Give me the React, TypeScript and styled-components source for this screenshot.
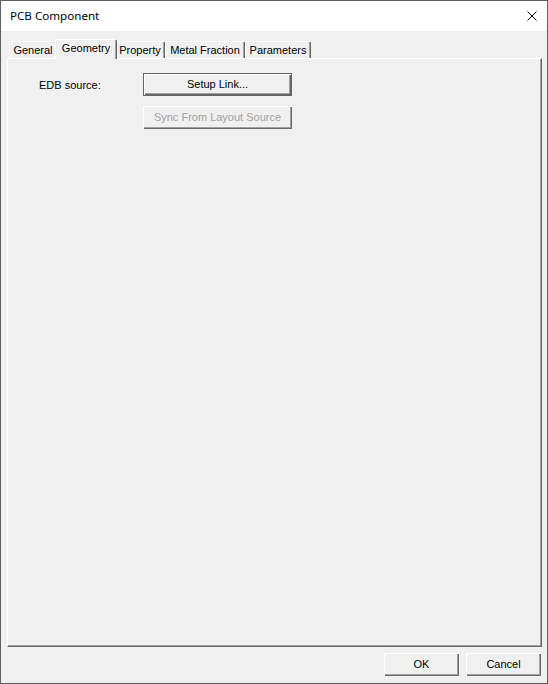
import { createGlobalStyle, styled } from 'styled-components';

const GlobalStyle = createGlobalStyle`
  html, body {
    margin: 0;
    padding: 0;
    background: #f0f0f0;
  }
  * {
    box-sizing: border-box;
  }
`;

const Window = styled.div`
  width: 548px;
  height: 684px;
  border: 1px solid #5f5f5f;
  background: #f0f0f0;
  display: flex;
  flex-direction: column;
  font-family: "Liberation Sans", Arial, sans-serif;
  font-size: 11px;
  color: #000;
`;

const TitleBar = styled.div`
  height: 30px;
  background: #fff;
  display: flex;
  align-items: center;
  justify-content: space-between;
  padding: 0 10px 0 9px;
`;

const Title = styled.span`
  font-family: "Segoe UI", "Noto Sans", sans-serif;
  font-size: 11.6px;
  padding-bottom: 1px;
`;

const CloseIcon = styled.svg`
  width: 10px;
  height: 10px;
`;

const Body = styled.div`
  flex: 1;
  display: flex;
  flex-direction: column;
  padding: 8px 5px 7px 6px;
`;

const TabStrip = styled.div`
  display: flex;
  align-items: flex-end;
  height: 19px;
  padding-left: 2px;
`;

const Tab = styled.div<{ $width: number; $active?: boolean }>`
  position: relative;
  width: ${(p) => (p.$active ? p.$width + 4 : p.$width)}px;
  height: ${(p) => (p.$active ? 20 : 17)}px;
  margin: ${(p) => (p.$active ? '0 -2px -1px' : '0')};
  z-index: ${(p) => (p.$active ? 2 : 1)};
  background: #f0f0f0;
  border-left: 1px solid #fff;
  border-top: 1px solid #fff;
  border-right: 1px solid #696969;
  border-top-left-radius: 2px;
  border-top-right-radius: 2px;
  box-shadow: inset -1px 0 #a0a0a0;
  display: flex;
  align-items: center;
  justify-content: center;
  padding-bottom: ${(p) => (p.$active ? 3 : 0)}px;
  white-space: nowrap;
`;

const Panel = styled.div`
  flex: 1;
  border-top: 1px solid #fff;
  border-left: 1px solid #fff;
  border-right: 1px solid #696969;
  border-bottom: 1px solid #696969;
  box-shadow: inset -1px -1px #a0a0a0;
  padding: 14px 0 0 31px;
`;

const FieldGrid = styled.div`
  display: grid;
  grid-template-columns: 104px 149px;
  row-gap: 10px;
  align-items: center;
`;

const Label = styled.span`
  padding-bottom: 0;
`;

const Button = styled.button<{ $default?: boolean; $width: number }>`
  width: ${(p) => p.$width}px;
  height: 23px;
  margin: 0;
  padding: 0 0 1px;
  font-family: "Liberation Sans", Arial, sans-serif;
  font-size: 11px;
  color: #000;
  background: #f0f0f0;
  border: ${(p) => (p.$default ? '1px solid #646464' : 'none')};
  box-shadow: inset 1px 1px #fff, inset -1px -1px #696969, inset -2px -2px #a0a0a0;
  outline: none;

  &:disabled {
    color: #a0a0a0;
  }
`;

const ButtonRow = styled.div`
  display: flex;
  justify-content: flex-end;
  gap: 7px;
  margin-top: 6px;
  padding-right: 1px;
`;

const tabs = [
  { name: 'General', width: 48 },
  { name: 'Geometry', width: 58, active: true },
  { name: 'Property', width: 50 },
  { name: 'Metal Fraction', width: 80 },
  { name: 'Parameters', width: 66 },
];

export default function App() {
  return (
    <>
      <GlobalStyle />
      <Window>
        <TitleBar>
          <Title>PCB Component</Title>
          <CloseIcon viewBox="0 0 10 10">
            <path d="M0.5 0.5 L9.5 9.5 M9.5 0.5 L0.5 9.5" stroke="#000" strokeWidth="1" fill="none" />
          </CloseIcon>
        </TitleBar>
        <Body>
          <TabStrip>
            {tabs.map((t) => (
              <Tab key={t.name} $width={t.width} $active={t.active}>
                {t.name}
              </Tab>
            ))}
          </TabStrip>
          <Panel>
            <FieldGrid>
              <Label>EDB source:</Label>
              <Button $default $width={149}>Setup Link...</Button>
              <span />
              <Button $width={149} disabled>Sync From Layout Source</Button>
            </FieldGrid>
          </Panel>
          <ButtonRow>
            <Button $width={75}>OK</Button>
            <Button $width={75}>Cancel</Button>
          </ButtonRow>
        </Body>
      </Window>
    </>
  );
}
